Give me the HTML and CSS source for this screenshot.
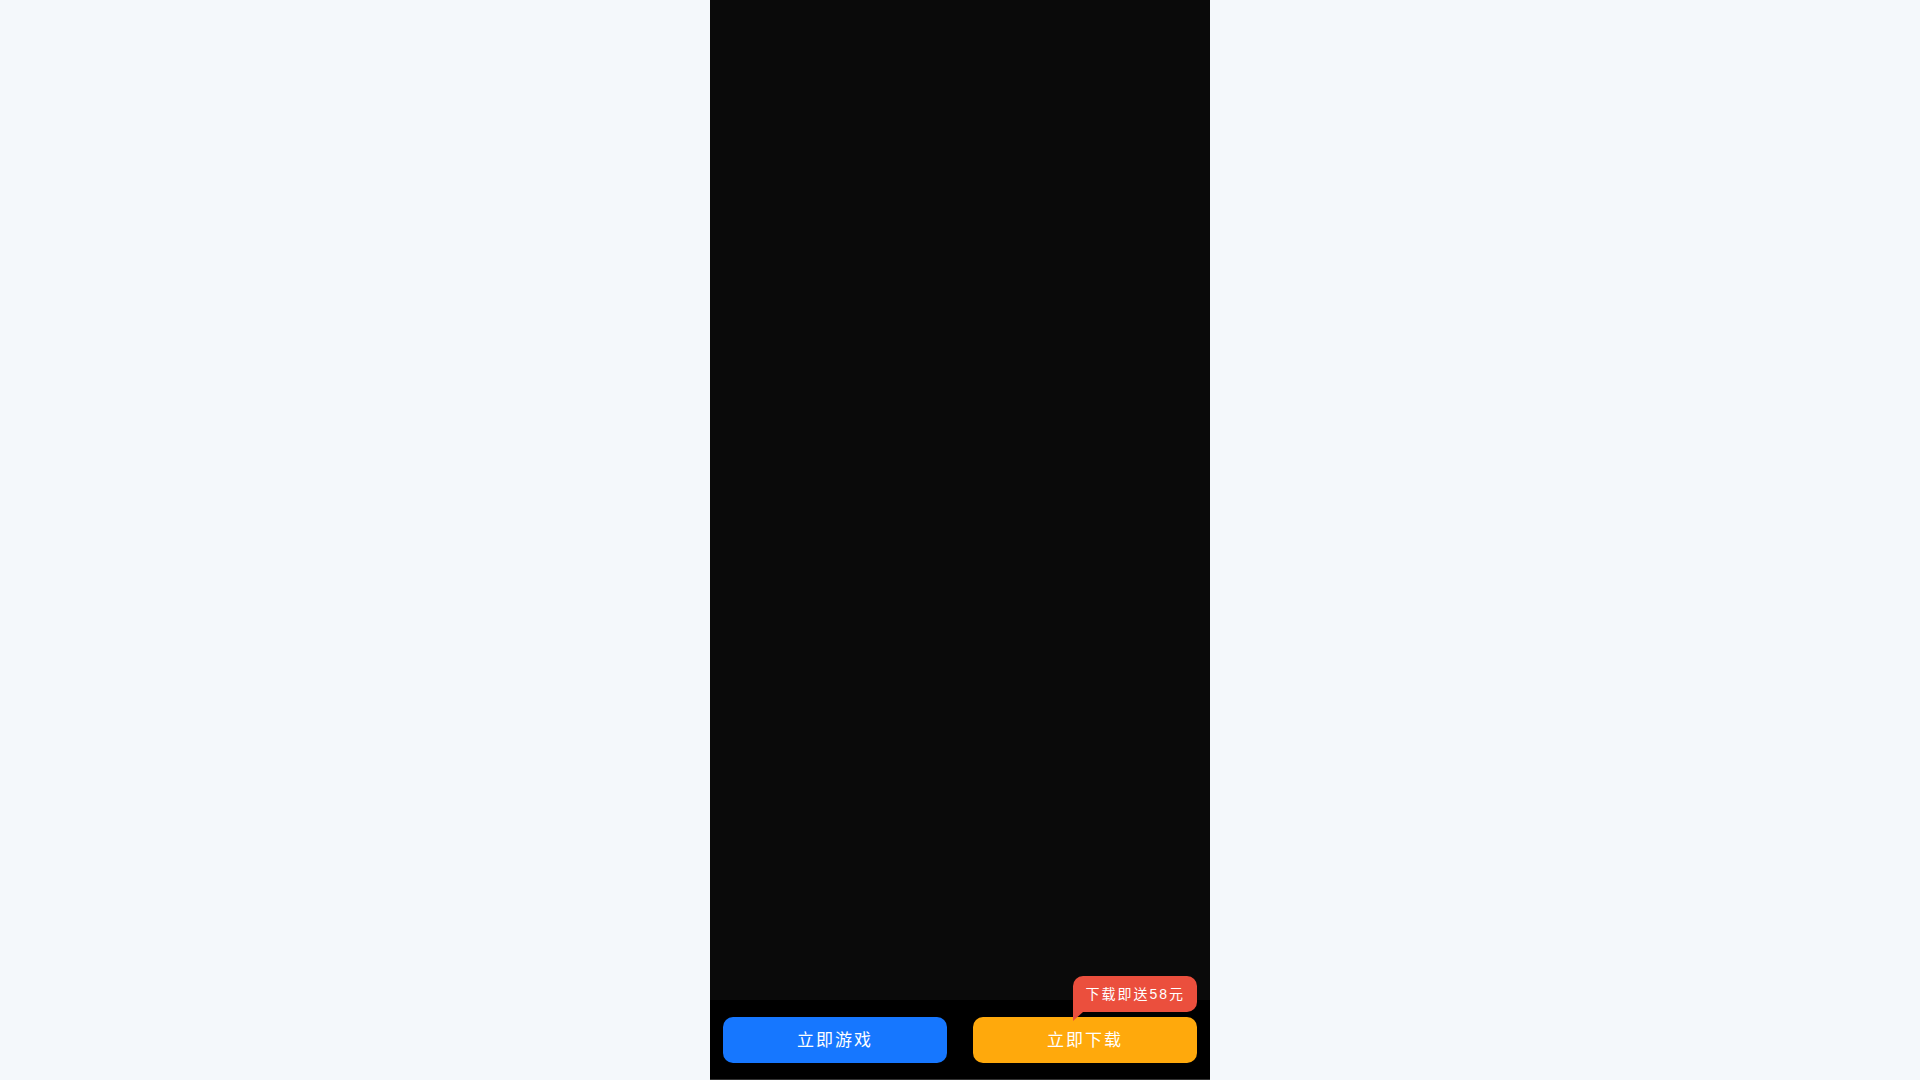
FILE: index.html
```
<!DOCTYPE html>
<html lang="zh-CN">
  <head>
    <meta charset="UTF-8" />
    <meta name="viewport" content="width=device-width, initial-scale=1.0" />
    <title>立即下载</title>
    <link rel="stylesheet" href="styles.css">
  </head>

  <body>
    <div class="container">
      <main class="content"></main>

      <div class="footer">
        <button type="button" class="btn btn-play">立即游戏</button>
        <button type="button" class="btn btn-download">
          立即下载
          <span class="tip">下载即送58元</span>
        </button>
      </div>
    </div>
  </body>
</html>
```
FILE: styles.css
```
* {
  margin: 0;
  padding: 0;
  box-sizing: border-box;
}

body {
  font-family: "Liberation Sans", "Noto Sans CJK SC", sans-serif;
  background: #f4f8fb;
}

.container {
  display: flex;
  flex-direction: column;
  max-width: 500px;
  min-height: 100vh;
  margin: 0 auto;
  background: #0a0a0a;
}

.content {
  flex: 1;
}

.footer {
  display: flex;
  gap: 26px;
  padding: 17px 13px 16px;
  background: #000;
  border-bottom: 1px solid #333;
}

.btn {
  position: relative;
  flex: 1;
  height: 46px;
  padding-bottom: 3px;
  border: none;
  border-radius: 10px;
  color: #fff;
  font-family: inherit;
  font-size: 17px;
  letter-spacing: 2px;
  cursor: pointer;
}

.btn-play {
  background: #1677ff;
}

.btn-download {
  background: #ffa90c;
}

/* bubble over the download button */
.tip {
  position: absolute;
  right: 0;
  bottom: 51px;
  padding: 0 12px;
  border-radius: 10px 10px 10px 0;
  background: #eb4f3d;
  font-size: 14px;
  line-height: 36px;
  white-space: nowrap;
}

.tip::after {
  content: "";
  position: absolute;
  left: 0;
  top: 100%;
  border-top: 9px solid #eb4f3d;
  border-right: 10px solid transparent;
}
```
